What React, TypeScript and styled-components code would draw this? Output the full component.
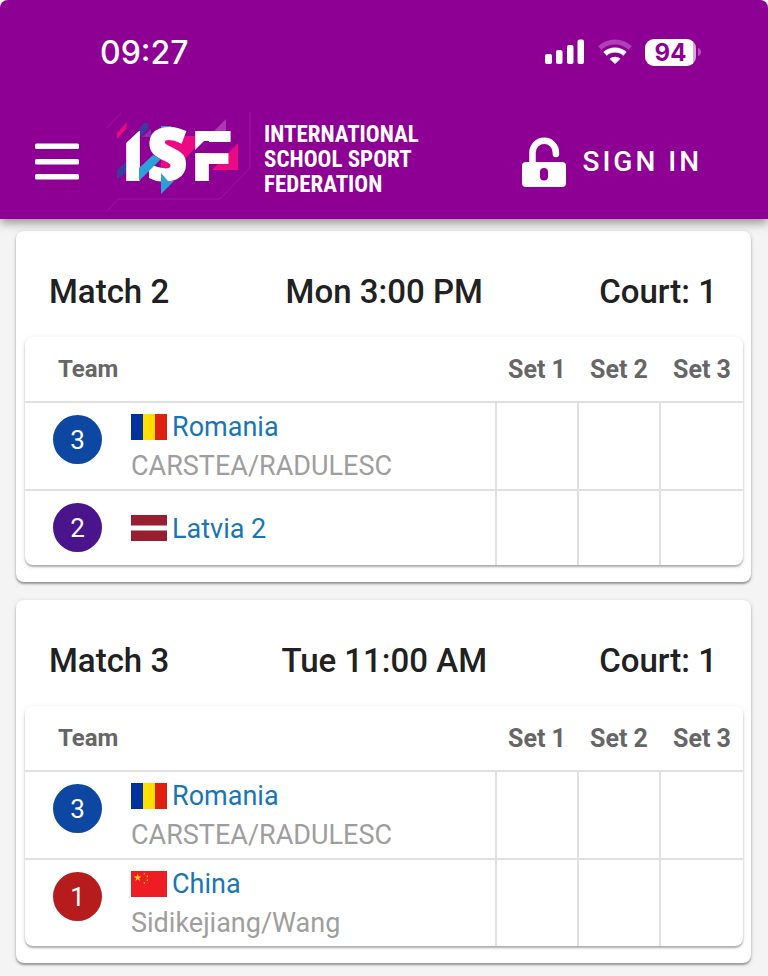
import React from "react";
import styled, { createGlobalStyle } from "styled-components";

const GlobalStyle = createGlobalStyle`
  *, *::before, *::after { box-sizing: border-box; }
  html { background: #ffffff; }
  body {
    margin: 0;
    font-family: Roboto, "Liberation Sans", sans-serif;
    color: #212121;
  }
`;

const Page = styled.div`
  min-height: 100vh;
  background: linear-gradient(#ffffff 100px, #f4f4f4 100px);
`;

const Header = styled.header`
  position: relative;
  height: 219px;
  background: #8e0093;
  color: #ffffff;
  border-radius: 8px 8px 0 0;
  box-shadow: 0 4px 8px rgba(0, 0, 0, 0.3), 0 2px 16px rgba(0, 0, 0, 0.14);
`;

const StatusBar = styled.div`
  display: flex;
  align-items: center;
  justify-content: space-between;
  height: 104px;
  padding: 0 67px 0 100px;
`;

const Clock = styled.time`
  padding-top: 2px;
  font: 500 32px/40px Inter, sans-serif;
`;

const StatusIcons = styled.div`
  display: flex;
  align-items: center;
  gap: 13px;
`;

const Battery = styled.div`
  display: flex;
  align-items: center;
  gap: 2px;
`;

const BatteryBody = styled.div`
  width: 51px;
  border-radius: 9px;
  background: linear-gradient(90deg, #ffffff 48px, #d9a6dc 48px);
  color: #8e0093;
  font: 700 24px/27px Inter, sans-serif;
  text-align: center;
`;

const NavBar = styled.nav`
  display: flex;
  align-items: center;
  height: 115px;
  padding: 0 66px 0 35px;
`;

const IconButton = styled.button`
  display: flex;
  padding: 0;
  border: 0;
  background: none;
  color: inherit;
`;

const Brand = styled.a`
  display: flex;
  align-items: center;
  gap: 11px;
  margin-left: 28px;
  color: inherit;
  text-decoration: none;
`;

const BrandName = styled.span`
  padding-bottom: 4px;
  font: 700 23px/25px "Liberation Sans Narrow", "Roboto Condensed", Roboto, sans-serif;
  white-space: nowrap;
`;

const SignIn = styled.button`
  display: flex;
  align-items: center;
  gap: 16px;
  margin-left: auto;
  padding: 0;
  border: 0;
  background: none;
  color: inherit;
  font: 500 28px/36px Roboto, sans-serif;
  letter-spacing: 3px;
  text-transform: uppercase;
  white-space: nowrap;
`;

const Matches = styled.main`
  display: grid;
  gap: 18px;
  padding: 12px 17px 12px 16px;
`;

const Card = styled.section`
  padding: 0 8px 17px 9px;
  border-radius: 8px;
  background: #ffffff;
  box-shadow: 0 2px 2px rgba(0, 0, 0, 0.32), 0 1px 5px rgba(0, 0, 0, 0.14);
`;

const CardTitle = styled.h2`
  display: flex;
  justify-content: space-between;
  margin: 0;
  padding: 32px 26px 16px 24px;
  font-size: 33px;
  font-weight: 500;
  line-height: 58px;
  white-space: nowrap;
`;

const TablePanel = styled.div`
  overflow: hidden;
  border-radius: 8px;
  box-shadow: 0 2px 2px rgba(0, 0, 0, 0.28), 0 1px 5px rgba(0, 0, 0, 0.1);
`;

const ScoreTable = styled.table`
  width: 100%;
  border-spacing: 0;
  table-layout: fixed;
`;

const HeadCell = styled.th<{ $team?: boolean }>`
  width: ${(p) => (p.$team ? "auto" : "82px")};
  height: 66px;
  padding: ${(p) => (p.$team ? "0 0 0 33px" : "0 0 0 2px")};
  border-bottom: 2px solid #e0e0e0;
  color: #666666;
  font-size: ${(p) => (p.$team ? "24px" : "25px")};
  font-weight: 700;
  text-align: ${(p) => (p.$team ? "left" : "center")};

  &:last-child { width: 84px; }
`;

const BodyRow = styled.tr`
  &:not(:last-child) > td { border-bottom: 2px solid #e0e0e0; }
`;

const TeamCell = styled.td`
  padding: 0 0 0 28px;
  vertical-align: top;
`;

const ScoreCell = styled.td`
  padding: 0;
  border-left: 2px solid #e0e0e0;
`;

const TeamLayout = styled.div`
  display: flex;
  gap: 29px;
  min-height: 74px;
`;

const Seed = styled.span<{ $color: string }>`
  flex: none;
  width: 49px;
  height: 49px;
  margin: 12px 0;
  border-radius: 50%;
  background: ${(p) => p.$color};
  color: #ffffff;
  font-size: 26px;
  line-height: 50px;
  text-align: center;
`;

const TeamInfo = styled.div`
  display: flex;
  flex-direction: column;
  justify-content: center;
  padding: 5px 0 3px;
  font-size: 27px;
  line-height: 39px;
`;

const Country = styled.div`
  display: flex;
  align-items: center;
  gap: 5px;

  svg { margin-bottom: 2px; }
`;

const CountryLink = styled.a`
  color: #1976b5;
  text-decoration: none;
`;

const Players = styled.div`
  color: #9e9e9e;
`;

type FlagName = "romania" | "latvia" | "china";

const star = "0,-1 .225,-.309 .951,-.309 .363,.118 .588,.809 0,.382 -.588,.809 -.363,.118 -.951,-.309 -.225,-.309";

const Flag = ({ name }: { name: FlagName }) => (
  <svg width="36" height="26" viewBox="0 0 36 26" aria-hidden="true">
    {name === "romania" && (
      <>
        <path fill="#00319c" d="M0 0h12v26H0z" />
        <path fill="#ffde00" d="M12 0h12v26H12z" />
        <path fill="#de2110" d="M24 0h12v26H24z" />
      </>
    )}
    {name === "latvia" && (
      <>
        <path fill="#fff" d="M0 0h36v26H0z" />
        <path fill="#981e32" d="M0 0h36v10.5H0zM0 15.5h36V26H0z" />
      </>
    )}
    {name === "china" && (
      <>
        <path fill="#ee1c25" d="M0 0h36v26H0z" />
        <g fill="#ffde00">
          <polygon points={star} transform="translate(6.7 6.7) scale(4)" />
          <polygon points={star} transform="translate(13.5 2.7) rotate(20) scale(1.3)" />
          <polygon points={star} transform="translate(16.3 5.3) rotate(45) scale(1.3)" />
          <polygon points={star} transform="translate(16.3 9.2) scale(1.3)" />
          <polygon points={star} transform="translate(13.5 12) rotate(20) scale(1.3)" />
        </g>
      </>
    )}
  </svg>
);

const SignalIcon = () => (
  <svg width="40" height="26" viewBox="0 0 40 26" fill="#fff" aria-hidden="true">
    <rect x="0" y="15" width="7" height="10" rx="2" />
    <rect x="11" y="11" width="6.500" height="14" rx="2" />
    <rect x="22" y="6" width="6.500" height="19" rx="2" />
    <rect x="32.500" y="0.500" width="6.500" height="24.500" rx="2" />
  </svg>
);

const WifiIcon = () => (
  <svg width="34" height="26" viewBox="0 0 34 26" fill="none" aria-hidden="true">
    <path d="M1.800 9a22 22 0 0 1 30.400 0" stroke="#b040b6" strokeWidth="5" />
    <path d="M7 14.800a14.800 14.800 0 0 1 20 0" stroke="#fff" strokeWidth="5" />
    <path fill="#fff" d="M11.500 19.800a8.200 8.200 0 0 1 11 0L17 25z" />
  </svg>
);

const MenuIcon = () => (
  <svg width="44" height="38" viewBox="0 0 44 38" fill="#fff" aria-hidden="true">
    <rect y="0.500" width="44" height="5.500" rx="1.500" />
    <rect y="16" width="44" height="5.500" rx="1.500" />
    <rect y="31" width="44" height="5.500" rx="1.500" />
  </svg>
);

const LockIcon = () => (
  <svg width="44" height="50" viewBox="0 0 44 50" aria-hidden="true">
    <path
      d="M10.500 28V15.500a11.700 11.700 0 0 1 23.400 0V17"
      fill="none"
      stroke="#fff"
      strokeWidth="6.500"
      strokeLinecap="round"
    />
    <rect y="25" width="44" height="25" rx="4" fill="#fff" />
    <rect x="18" y="31" width="8" height="12.500" rx="4" fill="#8e0093" />
  </svg>
);

const LogoText = styled.text`
  font: 900 69px Inter, sans-serif;
  fill: #ffffff;
`;

const LogoCurve = styled.text`
  font: 800 70px "Open Sans", sans-serif;
  fill: #ffffff;
  stroke: #ffffff;
  stroke-width: 2px;
`;

const LogoMark = () => (
  <svg width="146" height="100" viewBox="107 112 146 100" role="img" aria-label="ISF">
    <path
      d="M107 128l14-15M250 112v56l-30 31H118l-11 12"
      fill="none"
      stroke="#981a9f"
      strokeWidth="1"
    />
    <path fill="#ec0a84" d="M117 133l10-11-1 7-9 10z" />
    <path fill="#3a3b9f" d="M139 129l5-6h4v6l-9 9zM117 170l9-8v11l-9 6z" />
    <path fill="#8d2eb0" d="M142 137l9-8v8z" />
    <path fill="#2e9fd8" d="M161 126h11l-11 9z" />
    <path fill="#ec0a84" d="M161 140l26-4h8v12l-25 28h-9z" />
    <path fill="#a63cb0" d="M213 132l13-13v13z" />
    <path fill="#ec0a84" d="M212 170l26-27v27z" />
    <LogoText x="123" y="181">I</LogoText>
    <LogoCurve x="147" y="180">S</LogoCurve>
    <LogoText x="192" y="181">F</LogoText>
    <path fill="#2e9fd8" d="M139 168l14-13 8 4-22 22z" />
    <path fill="#8e0093" d="M125 130h15l-15 14z" />
    <path fill="#8e0093" d="M194 151l10-10h5v12h-15z" />
    <path fill="#ec0a84" d="M189 136h6v6l-6 6z" />
    <path fill="#2e9fd8" d="M161 173l7 8h6l-13 13z" />
  </svg>
);

interface Team {
  seed: number;
  color: string;
  flag: FlagName;
  country: string;
  players?: string;
}

interface Match {
  name: string;
  time: string;
  court: string;
  teams: Team[];
}

const romania: Team = {
  seed: 3,
  color: "#0d47a1",
  flag: "romania",
  country: "Romania",
  players: "CARSTEA/RADULESC",
};

const matches: Match[] = [
  {
    name: "Match 2",
    time: "Mon 3:00 PM",
    court: "Court: 1",
    teams: [romania, { seed: 2, color: "#4a148c", flag: "latvia", country: "Latvia 2" }],
  },
  {
    name: "Match 3",
    time: "Tue 11:00 AM",
    court: "Court: 1",
    teams: [
      romania,
      { seed: 1, color: "#b71c1c", flag: "china", country: "China", players: "Sidikejiang/Wang" },
    ],
  },
];

const sets = ["Set 1", "Set 2", "Set 3"];

const MatchCard = ({ match }: { match: Match }) => (
  <Card>
    <CardTitle>
      <span>{match.name}</span>
      <span>{match.time}</span>
      <span>{match.court}</span>
    </CardTitle>
    <TablePanel>
      <ScoreTable>
        <thead>
          <tr>
            <HeadCell $team scope="col">Team</HeadCell>
            {sets.map((set) => (
              <HeadCell key={set} scope="col">{set}</HeadCell>
            ))}
          </tr>
        </thead>
        <tbody>
          {match.teams.map((team) => (
            <BodyRow key={team.country}>
              <TeamCell>
                <TeamLayout>
                  <Seed $color={team.color}>{team.seed}</Seed>
                  <TeamInfo>
                    <Country>
                      <Flag name={team.flag} />
                      <CountryLink href="#team">{team.country}</CountryLink>
                    </Country>
                    {team.players && <Players>{team.players}</Players>}
                  </TeamInfo>
                </TeamLayout>
              </TeamCell>
              {sets.map((set) => (
                <ScoreCell key={set} />
              ))}
            </BodyRow>
          ))}
        </tbody>
      </ScoreTable>
    </TablePanel>
  </Card>
);

export default function App() {
  return (
    <Page>
      <GlobalStyle />
      <Header>
        <StatusBar>
          <Clock>09:27</Clock>
          <StatusIcons>
            <SignalIcon />
            <WifiIcon />
            <Battery>
              <BatteryBody>94</BatteryBody>
              <svg width="3" height="8" viewBox="0 0 3 8" aria-hidden="true">
                <path fill="#b94fbe" d="M0 0c4 1 4 7 0 8z" />
              </svg>
            </Battery>
          </StatusIcons>
        </StatusBar>
        <NavBar>
          <IconButton type="button" aria-label="Menu">
            <MenuIcon />
          </IconButton>
          <Brand href="#home">
            <LogoMark />
            <BrandName>
              INTERNATIONAL
              <br />
              SCHOOL SPORT
              <br />
              FEDERATION
            </BrandName>
          </Brand>
          <SignIn type="button">
            <LockIcon />
            Sign in
          </SignIn>
        </NavBar>
      </Header>
      <Matches>
        {matches.map((match) => (
          <MatchCard key={match.name} match={match} />
        ))}
      </Matches>
    </Page>
  );
}
